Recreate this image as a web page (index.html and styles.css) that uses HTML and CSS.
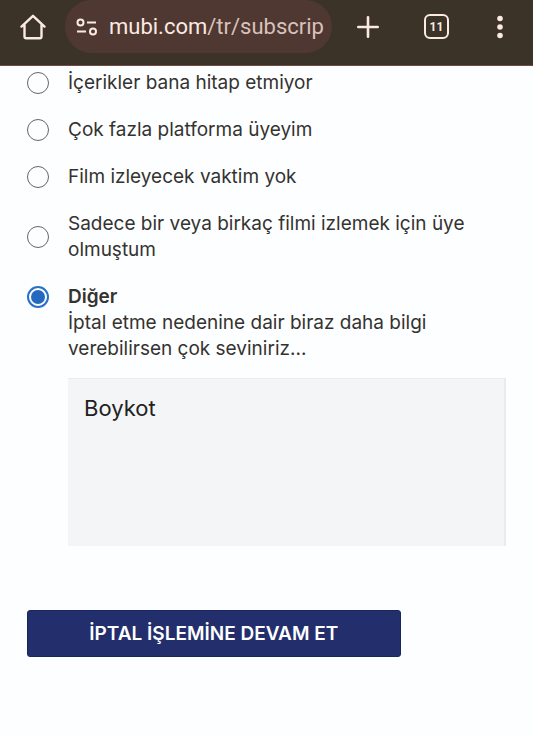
FILE: index.html
```html
<!DOCTYPE html>
<html lang="tr">
<head>
<meta charset="utf-8">
<meta name="viewport" content="width=device-width, initial-scale=1">
<title>MUBI</title>
<link rel="stylesheet" href="styles.css">
</head>
<body>
<header class="toolbar">
  <button class="tool" type="button" aria-label="Ana sayfa">
    <svg width="26" height="26" viewBox="0 0 26 26" fill="none" stroke="currentColor" stroke-width="2.4" stroke-linejoin="round" stroke-linecap="round"><path d="M1.500 12.600 13 1.800l11.500 10.800M4.500 10.500V22.500a1.700 1.700 0 0 0 1.700 1.700H19.800a1.700 1.700 0 0 0 1.700-1.700V10.500"/></svg>
  </button>
  <a class="address" href="#">
    <svg class="site" width="22" height="18" viewBox="0 0 22 18" fill="none" stroke="currentColor" stroke-width="2"><circle cx="4.500" cy="4.500" r="3"/><path d="M11 4.500h9M1 13.500h9"/><circle cx="17" cy="13.500" r="3"/></svg>
    <span class="url">mubi.com<span class="path">/tr/subscrip</span></span>
  </a>
  <div class="actions">
    <button class="tool" type="button" aria-label="Yeni sekme">
      <svg width="22" height="22" viewBox="0 0 22 22" fill="none" stroke="currentColor" stroke-width="2.600" stroke-linecap="round"><path d="M11 1.300v19.400M1.300 11h19.400"/></svg>
    </button>
    <button class="tool tabs" type="button">11</button>
    <button class="tool" type="button" aria-label="Menü">
      <svg width="6" height="24" viewBox="0 0 6 24" fill="currentColor"><circle cx="3" cy="3.500" r="2.800"/><circle cx="3" cy="12" r="2.800"/><circle cx="3" cy="20.500" r="2.800"/></svg>
    </button>
  </div>
</header>
<main>
  <form class="survey">
    <div class="option"><input type="radio" name="reason" id="r1"><label for="r1">İçerikler bana hitap etmiyor</label></div>
    <div class="option"><input type="radio" name="reason" id="r2"><label for="r2">Çok fazla platforma üyeyim</label></div>
    <div class="option"><input type="radio" name="reason" id="r3"><label for="r3">Film izleyecek vaktim yok</label></div>
    <div class="option"><input type="radio" name="reason" id="r4"><label for="r4">Sadece bir veya birkaç filmi izlemek için üye olmuştum</label></div>
    <div class="option"><input type="radio" name="reason" id="r5" checked><label class="chosen" for="r5">Diğer</label></div>
    <div class="details">
      <label for="note">İptal etme nedenine dair biraz daha bilgi verebilirsen çok seviniriz...</label>
      <textarea id="note">Boykot</textarea>
    </div>
    <button class="submit" type="button">İPTAL İŞLEMİNE DEVAM ET</button>
  </form>
</main>
</body>
</html>
```
FILE: styles.css
```css
* {
  box-sizing: border-box;
}

body {
  margin: 0;
  background: #fdfeff;
  color: #34332f;
  font-family: Inter, "Liberation Sans", sans-serif;
  font-size: 19px;
  line-height: 26px;
}

.toolbar {
  display: flex;
  align-items: center;
  padding: 0 30px 12px 20px;
  background: #3b3228;
  border-bottom: 1px solid #6f4b43;
  color: #fbe9e4;
}

.tool {
  display: flex;
  align-items: center;
  justify-content: center;
  padding: 0;
  border: 0;
  background: none;
  color: inherit;
}

.address {
  display: flex;
  flex: 1;
  align-items: center;
  gap: 11px;
  min-width: 0;
  height: 53px;
  margin: 0 25px 0 19px;
  padding: 0 8px 0 11px;
  border-radius: 27px;
  background: #4f3831;
  color: inherit;
  text-decoration: none;
}

.site {
  flex: none;
}

.url {
  font-family: Roboto, sans-serif;
  font-size: 22px;
  white-space: nowrap;
}

.path {
  color: #d9c2bb;
}

.actions {
  display: flex;
  align-items: center;
  gap: 45px;
}

.tabs {
  width: 25px;
  height: 25px;
  border: 2px solid currentColor;
  border-radius: 6px;
  font: bold 12px Roboto, sans-serif;
}

.actions .tool:last-child {
  margin-left: 3px;
}

.survey {
  display: flex;
  flex-direction: column;
  gap: 21px;
  padding: 4px 27px 80px;
}

.option {
  display: flex;
  align-items: center;
  gap: 19px;
  padding-right: 20px;
}

.option input {
  display: grid;
  flex: none;
  place-items: center;
  width: 22px;
  height: 22px;
  margin: 0;
  appearance: none;
  border: 1px solid #66666a;
  border-radius: 50%;
}

.option input:checked {
  border: 2px solid #2870c8;
}

.option input:checked::before {
  width: 14px;
  height: 14px;
  border-radius: 50%;
  background: #2468c0;
  content: "";
}

.chosen {
  font-weight: 600;
}

.details {
  display: flex;
  flex-direction: column;
  gap: 16px;
  margin: -21px 0 0 41px;
}

.details label {
  max-width: 400px;
}

textarea {
  width: 100%;
  height: 168px;
  padding: 15px 16px;
  border: solid #eaebea;
  border-width: 1px 2px 0 0;
  border-radius: 0;
  background: #f4f5f7;
  color: #22211e;
  font: 22px/28px Inter, "Liberation Sans", sans-serif;
  resize: none;
}

.submit {
  width: 78%;
  height: 47px;
  margin-top: 43px;
  padding: 0;
  border: 1px solid #1c2560;
  border-radius: 3px;
  background: #232f6c;
  color: #fff;
  font: 600 19px Inter, "Liberation Sans", sans-serif;
}
```
